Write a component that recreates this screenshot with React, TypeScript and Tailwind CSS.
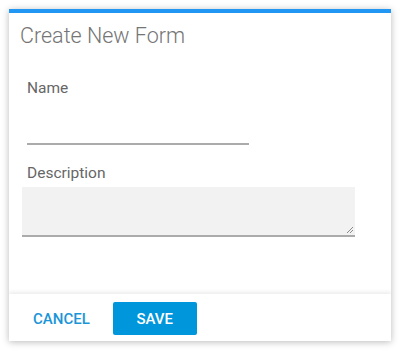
export default function App() {
  return (
    <div className="h-[352px] w-[400px] bg-white p-[9px] font-['Roboto',sans-serif]">
      <div className="flex h-[332px] w-[382px] flex-col overflow-hidden border-t-[4px] border-[#2196f3] bg-white shadow-[0_1px_7px_rgba(0,0,0,0.28)]">
        <div className="flex-1 px-[11px] pt-[10px]">
          <h1 className="text-[21.5px] font-light leading-[26px] text-[#757575]">Create New Form</h1>

          <div className="pl-[7px] pt-[30px]">
            <label className="block text-[15.5px] leading-[18px] text-[#666666]">Name</label>
            <div className="mt-[46px] h-[2px] w-[222px] bg-[#ababab]" />
          </div>

          <div className="pt-[19px]">
            <label className="block pl-[7px] text-[15.5px] leading-[18px] text-[#666666]">Description</label>
            <div className="relative ml-[2px] mt-[5px] h-[50px] w-[333px] border-b-[2px] border-[#ababab] bg-[#f2f2f2]">
              <svg className="absolute bottom-[1px] right-[1px]" width="8" height="8" viewBox="0 0 8 8">
                <path d="M1 7 L7 1 M4 7 L7 4" stroke="#8a8a8a" strokeWidth="1" fill="none" />
              </svg>
            </div>
          </div>
        </div>

        <div className="relative flex h-[47px] items-center gap-[23px] bg-white pl-[24px] shadow-[0_-2px_4px_rgba(0,0,0,0.08)]">
          <button className="mt-[2px] text-[15px] font-medium leading-[18px] text-[#1a95d8]">CANCEL</button>
          <button className="mt-[1px] h-[33px] w-[84px] rounded-[2px] bg-[#0096db] pt-[2px] text-[15px] font-medium text-white">
            SAVE
          </button>
        </div>
      </div>
    </div>
  );
}
